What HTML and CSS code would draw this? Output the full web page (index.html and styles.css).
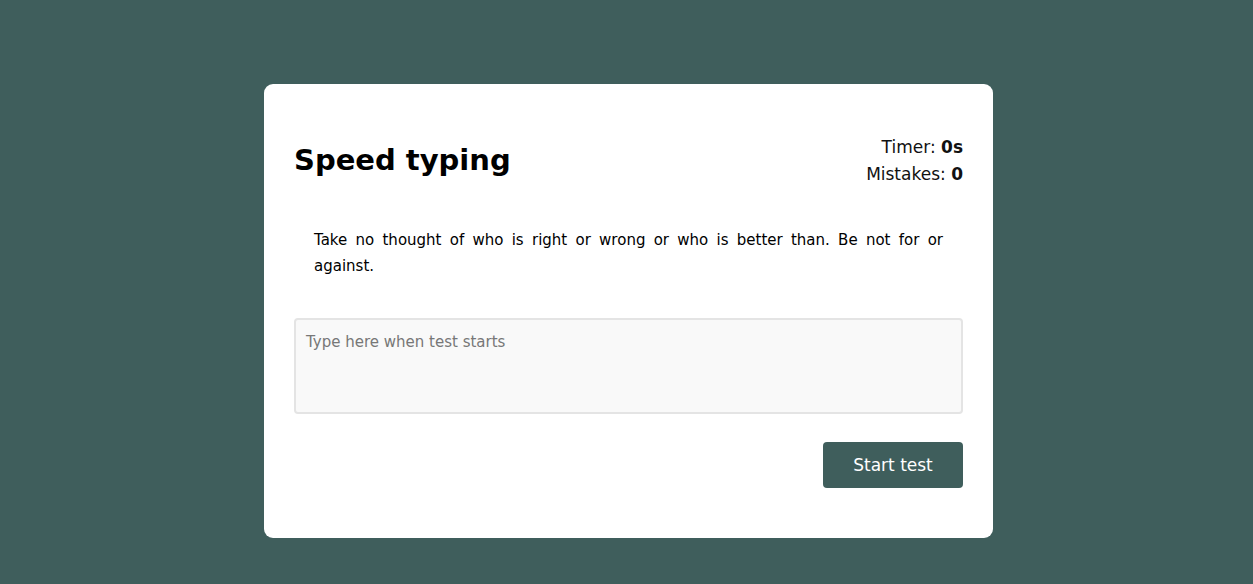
FILE: index.html
```html
<!DOCTYPE html>
<html lang="en">
<head>
<meta charset="utf-8">
<title>Speed typing</title>
<link rel="stylesheet" href="styles.css">
</head>
<body>
<main class="page">
  <section class="card">
    <header class="card-header">
      <h1 class="title">Speed typing</h1>
      <div class="stats">
        <div class="stat">Timer: <b>0s</b></div>
        <div class="stat">Mistakes: <b>0</b></div>
      </div>
    </header>
    <p class="quote">Take no thought of who is right or wrong or who is better than. Be not for or against.</p>
    <textarea class="input" placeholder="Type here when test starts"></textarea>
    <div class="actions">
      <button class="btn" type="button">Start test</button>
    </div>
  </section>
</main>
</body>
</html>
```
FILE: styles.css
```css
* { box-sizing: border-box; }
html, body { margin: 0; height: 100%; }
body {
  background: #3f5e5c;
  font-family: "DejaVu Sans", "Open Sans", sans-serif;
  color: #111;
}
.page {
  display: flex;
  justify-content: center;
  padding: 84px 0 0 4px;
}
.card {
  width: 729px;
  height: 454px;
  background: #fff;
  border-radius: 9px;
  padding: 50px 30px 30px;
  display: flex;
  flex-direction: column;
}
.card-header {
  display: flex;
  justify-content: space-between;
  align-items: center;
  height: 54px;
}
.title {
  margin: 0 0 3px;
  font-size: 29px;
  font-weight: 700;
  line-height: 48px;
  color: #000;
}
.stats {
  text-align: right;
  font-size: 17px;
  line-height: 27px;
}
.stat b { font-weight: 700; }
.quote {
  margin: 39px 20px 0;
  font-size: 15px;
  line-height: 26px;
  text-align: justify;
  color: #000;
}
.input {
  display: block;
  margin-top: 39px;
  width: 100%;
  height: 96px;
  resize: none;
  background: #f9f9f9;
  border: 2px solid #e4e4e4;
  border-radius: 4px;
  padding: 10px 10px;
  font-family: inherit;
  font-size: 15px;
  line-height: 24px;
  color: #333;
}
.input::placeholder { color: #777; }
.actions {
  display: flex;
  justify-content: flex-end;
  margin-top: 28px;
}
.btn {
  width: 140px;
  height: 46px;
  background: #3f5e5c;
  color: #fff;
  border: none;
  border-radius: 4px;
  font-family: inherit;
  font-size: 17px;
}
```
